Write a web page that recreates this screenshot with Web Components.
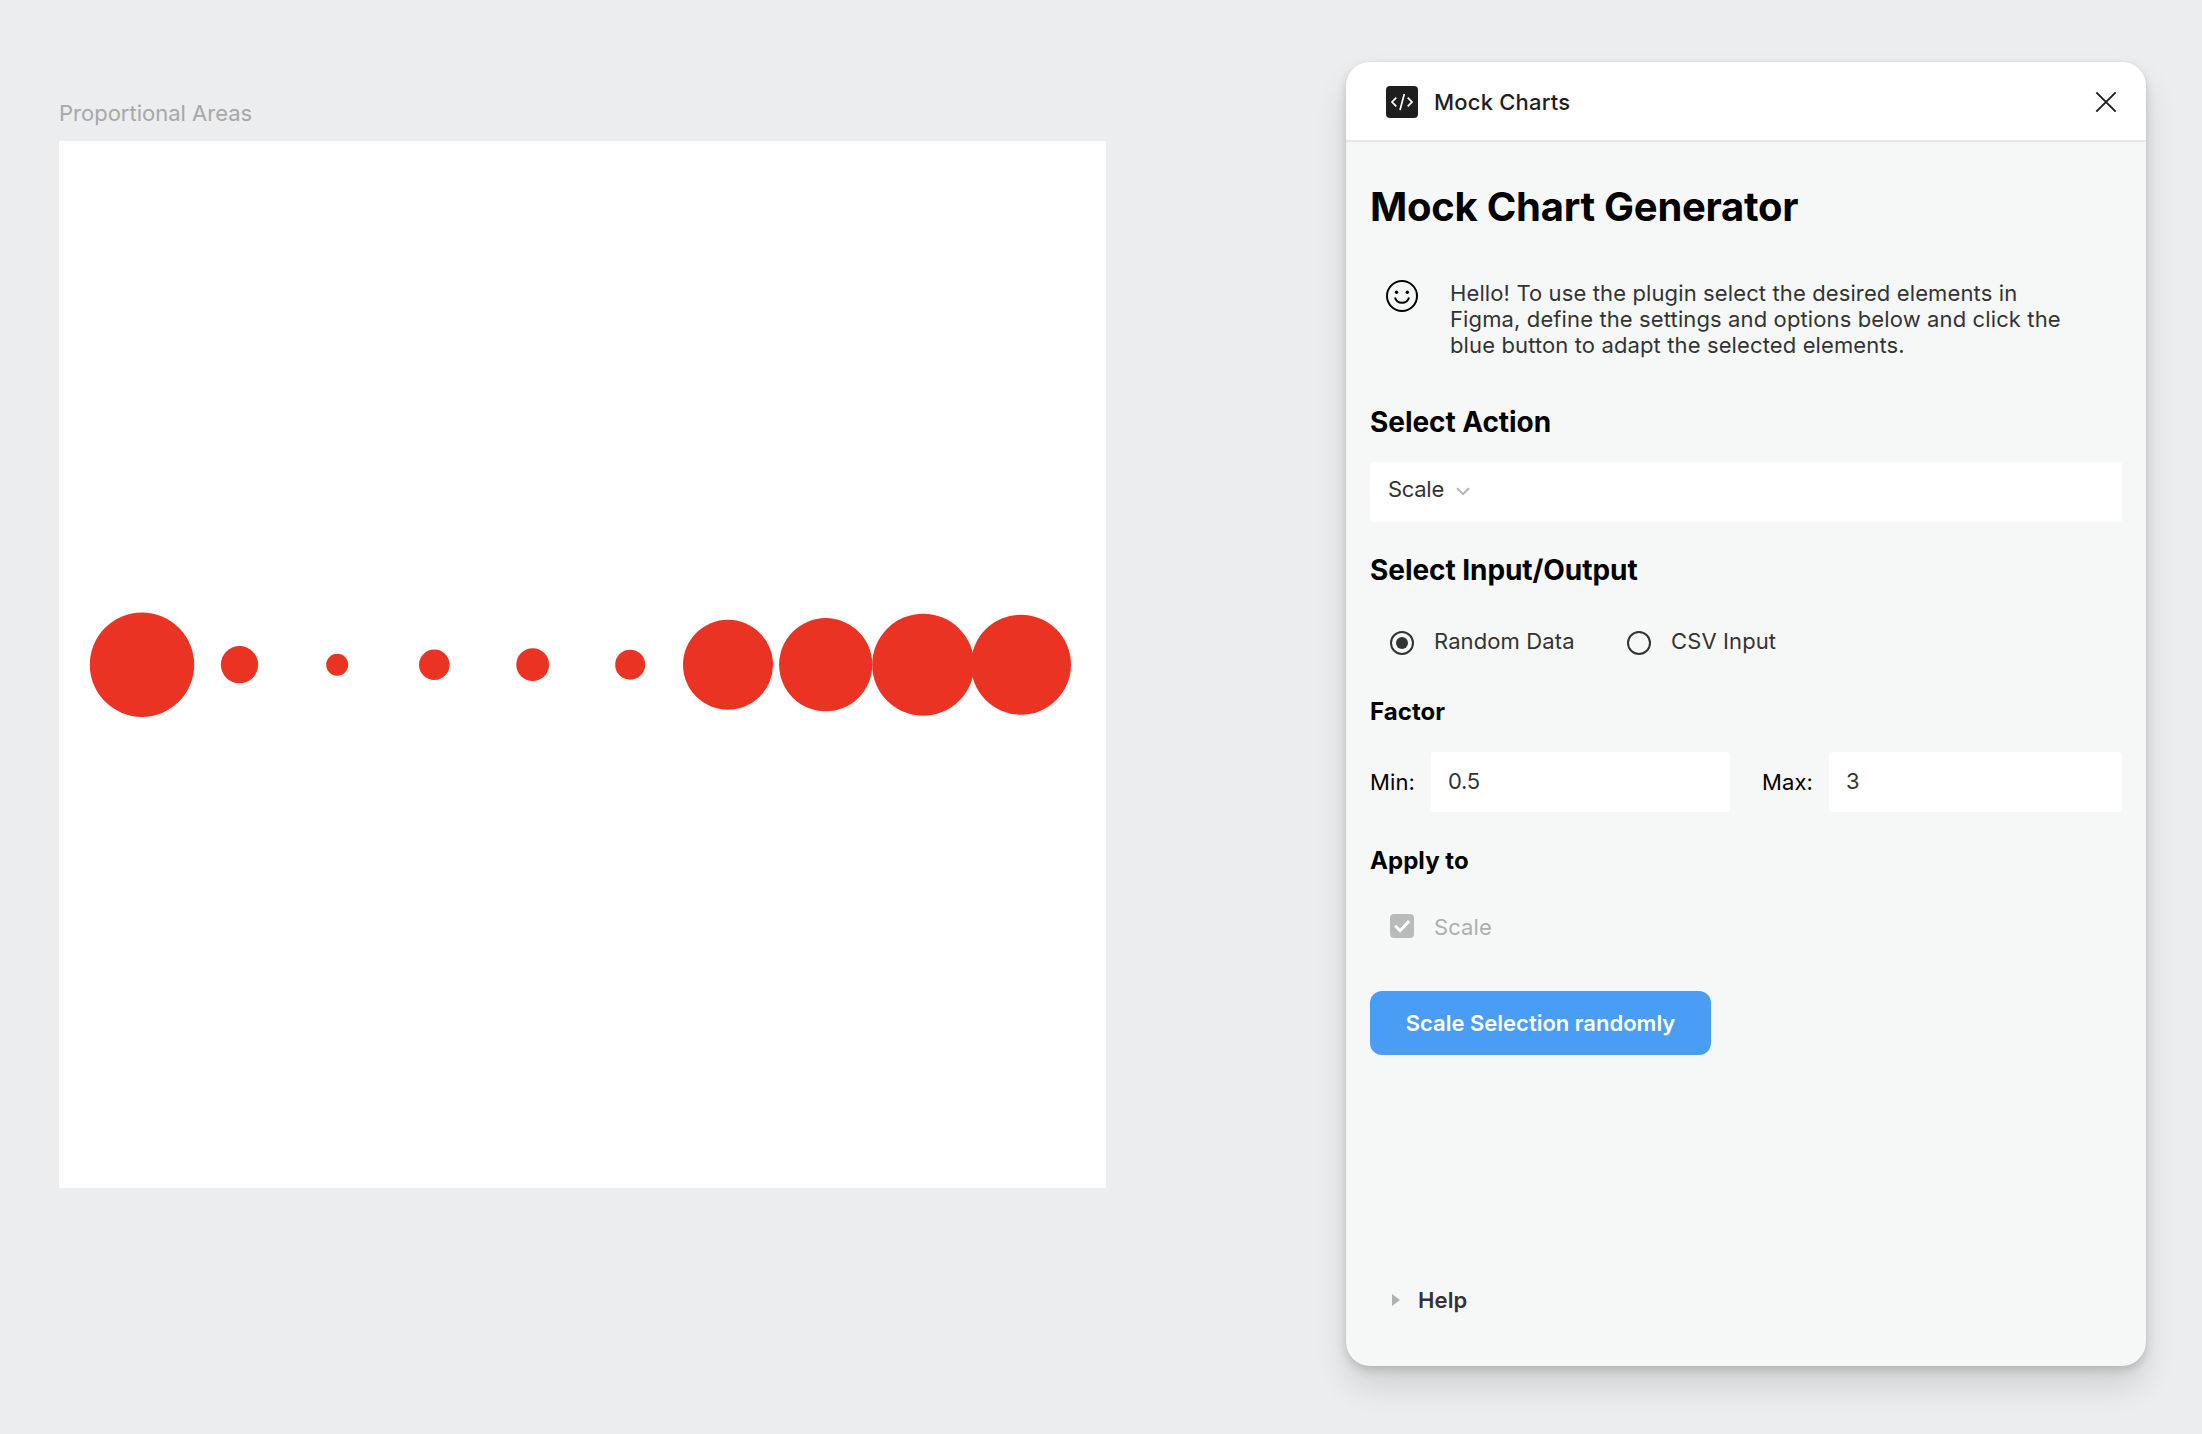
<!DOCTYPE html>
<html lang="en">
<head>
<meta charset="utf-8">
<title>Mock Charts</title>
<style>
  html, body { margin: 0; height: 100%; }
  body {
    background: #ecedef;
    font: 400 22px/32px Inter, "Liberation Sans", sans-serif;
    letter-spacing: .11px;
    color: #333;
    overflow: hidden;
  }
</style>
</head>
<body>
<mock-workspace>
  <art-board slot="canvas" label="Proportional Areas" sizes="104.4,37.3,22,30.6,32.8,30,90,93.2,102,100" centers="83,180.5,278.2,375.3,473.7,571.2,669,766.7,864.2,962"></art-board>
  <plugin-window slot="window" name="Mock Charts">
    <section-title level="1">Mock Chart Generator</section-title>
    <intro-note>Hello! To use the plugin select the desired elements in Figma, define the settings and options below and click the blue button to adapt the selected elements.</intro-note>
    <section-title level="2">Select Action</section-title>
    <select-field>Scale</select-field>
    <section-title level="2" class="io">Select Input/Output</section-title>
    <option-row>
      <radio-option checked>Random Data</radio-option>
      <radio-option>CSV Input</radio-option>
    </option-row>
    <section-title level="3">Factor</section-title>
    <range-fields>
      <number-field label="Min:" value="0.5"></number-field>
      <number-field label="Max:" value="3"></number-field>
    </range-fields>
    <section-title level="3">Apply to</section-title>
    <check-option>Scale</check-option>
    <action-button>Scale Selection randomly</action-button>
    <help-disclosure slot="footer">Help</help-disclosure>
  </plugin-window>
</mock-workspace>

<script>
const define = (name, html, init) => {
  const tpl = document.createElement('template');
  tpl.innerHTML = html;
  customElements.define(name, class extends HTMLElement {
    constructor() {
      super();
      this.attachShadow({ mode: 'open' }).append(tpl.content.cloneNode(true));
    }
    connectedCallback() { if (init) init(this, this.shadowRoot); }
  });
};

define('mock-workspace', `
  <style>
    :host { display: flex; justify-content: space-between; align-items: flex-start;
      box-sizing: border-box; height: 1434px; padding: 62px 56px 0 59px; }
  </style>
  <slot name="canvas"></slot><slot name="window"></slot>`);

define('art-board', `
  <style>
    :host { display: block; width: 1047px; padding-top: 35px; }
    .label { height: 44px; color: #a6a8a9; line-height: 32px; letter-spacing: 0; }
    .board { height: 1047px; background: #fff; }
    svg { display: block; width: 1047px; height: 1047px; fill: #eb3323; }
  </style>
  <div class="label"></div>
  <div class="board"><svg viewBox="0 0 1047 1047"></svg></div>`,
  (el, root) => {
    root.querySelector('.label').textContent = el.getAttribute('label');
    const centers = el.getAttribute('centers').split(',');
    root.querySelector('svg').innerHTML = el.getAttribute('sizes').split(',')
      .map((d, i) => `<circle cx="${centers[i]}" cy="523.7" r="${d / 2}"/>`).join('');
  });

define('plugin-window', `
  <style>
    :host { display: flex; flex-direction: column; width: 800px; height: 1304px;
      border-radius: 24px; overflow: hidden; background: #f6f8f7;
      box-shadow: 0 0 1px rgba(0,0,0,.12), 0 20px 32px rgba(0,0,0,.12), 0 4px 10px rgba(0,0,0,.15); }
    header { display: flex; align-items: center; box-sizing: border-box; height: 80px;
      padding: 2px 28px 0 40px; background: #fff; border-bottom: 2px solid #e5e7e6; }
    .name { flex: 1; margin-left: 16px; color: #1e1e1e; font-weight: 500; letter-spacing: .2px; }
    svg { display: block; }
    main { flex: 1; display: flex; flex-direction: column; padding: 0 24px; }
    footer { padding: 0 24px 50px; }
  </style>
  <header>
    <svg width="32" height="32" viewBox="0 0 32 32" fill="none" stroke="#fff" stroke-width="1.7">
      <rect width="32" height="32" rx="4" fill="#1e1e1e" stroke="none"/>
      <path d="M10.3 11.6 6 16l4.3 4.400M21.700 11.600 26 16l-4.300 4.400M18.300 8 14 24"/>
    </svg>
    <div class="name"></div>
    <svg width="24" height="24" viewBox="0 0 24 24" fill="none" stroke="#1e1e1e" stroke-width="1.9">
      <path d="m2.3 2.3 19.4 19.4M21.7 2.3 2.3 21.7"/>
    </svg>
  </header>
  <main><slot></slot></main>
  <footer><slot name="footer"></slot></footer>`,
  (el, root) => { root.querySelector('.name').textContent = el.getAttribute('name'); });

define('section-title', `
  <style>
    :host { display: block; color: #000; }
    h1, h2, h3 { margin: 0; font-weight: 700; }
    h1 { font-size: 40px; line-height: 49px; padding: 40px 0 49px; letter-spacing: -.26px; }
    h2 { font-size: 28px; line-height: 34px; padding: 35px 0 23px; letter-spacing: -.06px; }
    :host(.io) h2 { padding: 31px 0 22px; }
    h3 { font-size: 24px; line-height: 29px; letter-spacing: .05px; padding: 33px 0 26px; }
  </style>`,
  (el, root) => {
    const h = document.createElement('h' + el.getAttribute('level'));
    h.append(document.createElement('slot'));
    root.append(h);
  });

define('intro-note', `
  <style>
    :host { display: flex; align-items: flex-start; gap: 32px; padding-left: 16px; line-height: 26px; height: 90px; }
    p { margin: 0; width: 620px; letter-spacing: .12px; }
    svg { flex: none; display: block; }
  </style>
  <svg width="32" height="32" viewBox="0 0 32 32" fill="none" stroke="#000" stroke-width="2">
    <circle cx="16" cy="16" r="15"/>
    <path d="M9 17.4c.9 3.300 3.700 5.300 7 5.300s6.100-2 7-5.300"/>
    <g fill="#000" stroke="none"><circle cx="10.500" cy="12.300" r="1.700"/><circle cx="21.300" cy="12.300" r="1.700"/></g>
  </svg>
  <p><slot></slot></p>`);

define('select-field', `
  <style>
    :host { display: flex; align-items: center; gap: 12px; box-sizing: border-box; height: 60px;
      padding: 0 18px 6px; background: #fff; border-radius: 4px; letter-spacing: -.3px; }
    svg { display: block; margin-top: 5px; }
  </style>
  <span><slot></slot></span>
  <svg width="14" height="9" viewBox="0 0 14 9" fill="none" stroke="#b3b3b3" stroke-width="2">
    <path d="m1 1.200 6 6 6-6"/>
  </svg>`);

define('option-row', `
  <style>:host { display: flex; gap: 52.4px; box-sizing: border-box; padding: 16px 0 0 20px; height: 55px; }</style>
  <slot></slot>`);

define('radio-option', `
  <style>
    :host { display: flex; gap: 20px; height: 32px; }
    svg { display: block; margin-top: 6px; }
    .dot { display: none; }
    :host([checked]) .dot { display: block; }
  </style>
  <svg width="24" height="24" viewBox="0 0 24 24" fill="none" stroke="#333" stroke-width="2">
    <circle cx="12" cy="12" r="11"/><circle class="dot" cx="12" cy="12" r="6" fill="#333" stroke="none"/>
  </svg>
  <span><slot></slot></span>`);

define('range-fields', `
  <style>
    :host { display: grid; grid-template-columns: 360px 360px; gap: 32px; margin-bottom: 1px; }
  </style>
  <slot></slot>`);

define('number-field', `
  <style>
    :host { display: flex; align-items: center; justify-content: space-between; color: #000; }
    .box { display: block; box-sizing: border-box; width: 299px; height: 60px; padding: 13px 17px;
      background: #fff; border-radius: 4px; color: #333; letter-spacing: -.3px; }
    :host([label="Max:"]) .box { width: 293px; }
  </style>
  <span class="label"></span><span class="box"></span>`,
  (el, root) => {
    root.querySelector('.label').textContent = el.getAttribute('label');
    root.querySelector('.box').textContent = el.getAttribute('value');
  });

define('check-option', `
  <style>
    :host { display: flex; gap: 20px; box-sizing: border-box; height: 90px; padding: 10px 0 0 20px; color: #adafae; }
    svg { display: block; margin-top: 3px; }
  </style>
  <svg width="24" height="24" viewBox="0 0 24 24" fill="none" stroke="#fff" stroke-width="3">
    <rect width="24" height="24" rx="4" fill="#b9bbba" stroke="none"/>
    <path d="m5.200 11.800 4.900 4.900 9-9.700"/>
  </svg>
  <span><slot></slot></span>`);

define('action-button', `
  <style>
    :host { display: block; }
    button { display: block; border: 0; width: 341px; height: 64px; padding: 0; border-radius: 12px;
      background: #4a9df5; color: #fff; font: inherit; font-weight: 600; letter-spacing: 0; text-align: center; }
  </style>
  <button><slot></slot></button>`);

define('help-disclosure', `
  <style>
    :host { display: flex; align-items: center; gap: 18px; height: 32px; padding-left: 22px; font-weight: 600; }
    svg { display: block; }
  </style>
  <svg width="8" height="12" viewBox="0 0 8 12" fill="#b0b2b1"><path d="M0 0 8 6 0 12Z"/></svg>
  <span><slot></slot></span>`);

</script>
</body>
</html>
